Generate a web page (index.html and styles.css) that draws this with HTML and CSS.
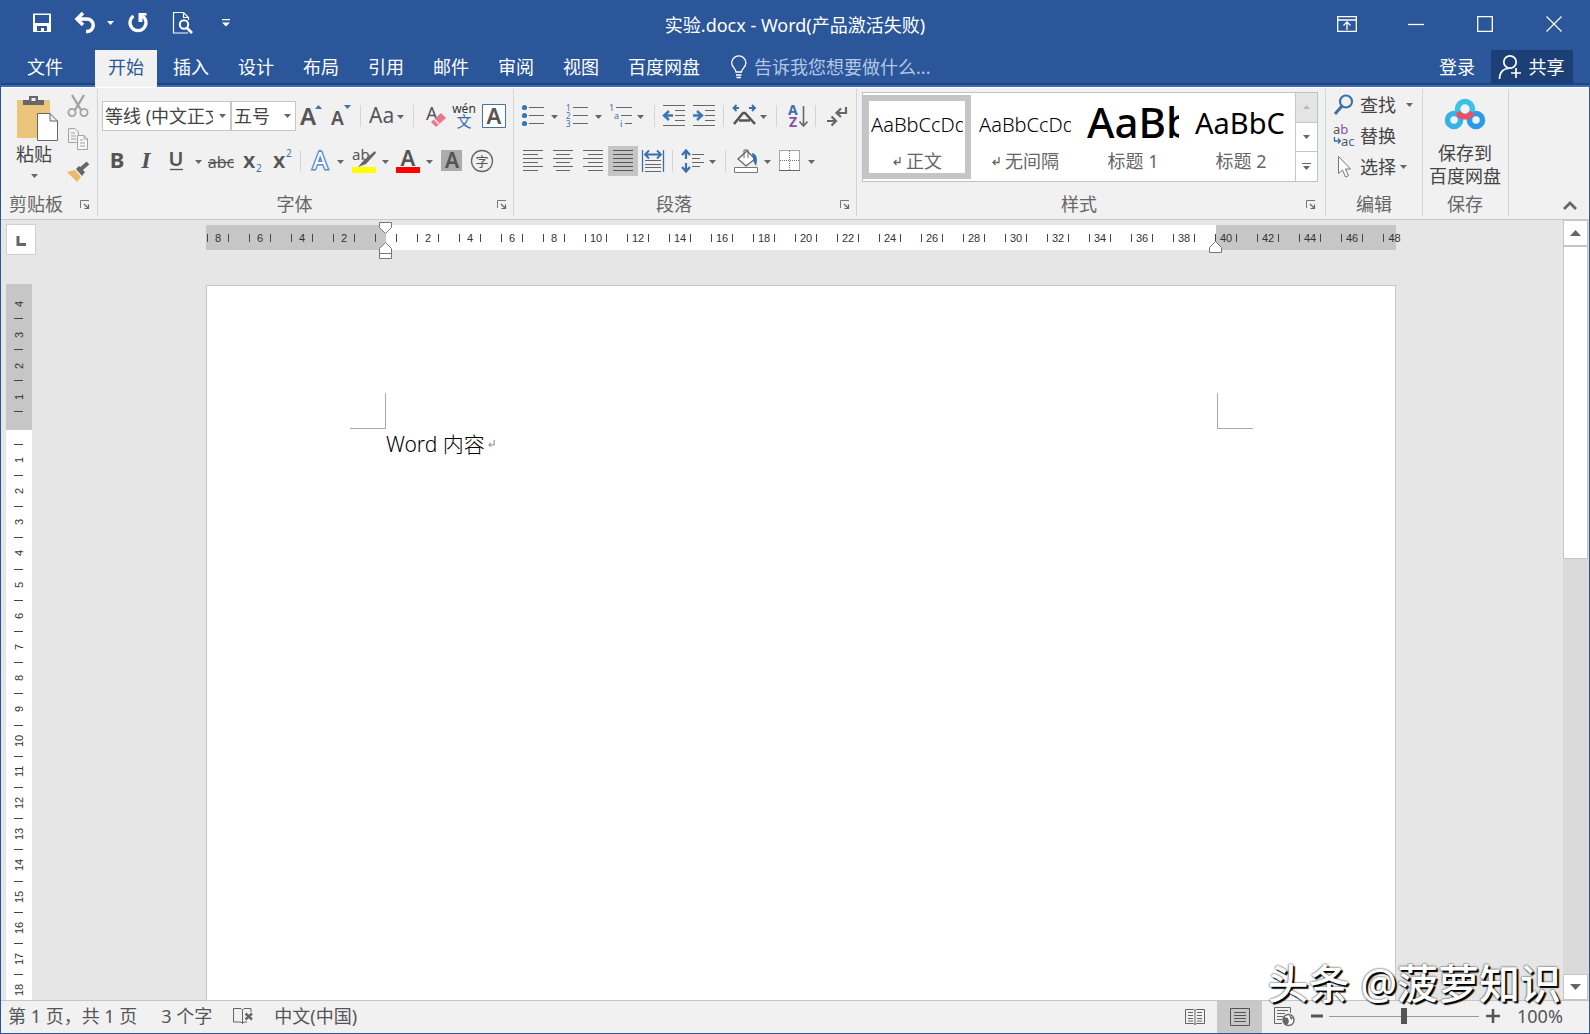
FILE: index.html
```html
<!DOCTYPE html>
<html lang="zh-CN">
<head>
<meta charset="utf-8">
<title>实验.docx - Word</title>
<link rel="stylesheet" href="styles.css">
</head>
<body>
<svg class="defs" aria-hidden="true">
  <defs>
    <path id="caret" d="M0 0h7l-3.500 4z" fill="#666"/>
    <g id="launch"><path d="M.5 8V.5H9" fill="none" stroke="#777"/><path d="M4 4l4 4M8.500 4.500v4h-4" fill="none" stroke="#666" stroke-width="1.200"/></g>
  </defs>
</svg>

<header class="titlebar">
  <div class="quick">
    <button class="q-btn" aria-label="保存"><svg width="22" height="22" viewBox="0 0 22 22"><path d="M2 1.500h18v18.500H2z" fill="#fff"/><path d="M4 3h14v8H4zM6 14h10v5h-3v-3h-3v3H6z" fill="#2b579a"/></svg></button>
    <button class="q-btn wide" aria-label="撤消"><svg width="34" height="22" viewBox="0 0 34 22"><path d="M10 1L4 7l6 6M5 7h9a6 6 0 0 1 0 12.500h-1" fill="none" stroke="#fff" stroke-width="3.500"/><path d="M34 9h7l-3.500 4z" fill="#fff"/></svg></button>
    <button class="q-btn" aria-label="重复"><svg width="22" height="22" viewBox="0 0 22 22"><path d="M6.500 4A8 8 0 1 0 15.500 4" fill="none" stroke="#fff" stroke-width="3.200"/><path d="M11.500 1h8v2.500h-4V10h-4z" fill="#fff"/></svg></button>
    <button class="q-btn" aria-label="打印预览"><svg width="26" height="24" viewBox="-3 0 26 24"><path d="M16 22H1.500V1.500h10l5 5V9M11.500 1.500v5h5" fill="none" stroke="#fff" stroke-width="1.200"/><circle cx="12" cy="13.500" r="4.200" fill="none" stroke="#fff" stroke-width="2"/><path d="M15 17l5 5" stroke="#fff" stroke-width="2.600"/></svg></button>
    <button class="q-btn" aria-label="自定义快速访问工具栏"><svg width="8" height="8" viewBox="0 0 8 8"><path d="M0 0h8v1.300H0zM0 3.500h8l-4 4z" fill="#fff"/></svg></button>
  </div>
  <h1 class="title">实验.docx - Word(产品激活失败)</h1>
  <div class="win">
    <button aria-label="功能区显示选项"><svg width="20" height="16" viewBox="0 0 20 16"><path d="M.7.7h18.600v14.600H.7zM.7 4h18.600M10 14V6.500M6.500 9.500L10 6l3.500 3.500" fill="none" stroke="#fff" stroke-width="1.300"/></svg></button>
    <button aria-label="最小化"><svg width="16" height="16" viewBox="0 0 16 16"><path d="M0 8.500h16" stroke="#fff" stroke-width="1.300"/></svg></button>
    <button aria-label="最大化"><svg width="16" height="16" viewBox="0 0 16 16"><path d="M.7.7h14.600v14.600H.7z" fill="none" stroke="#fff" stroke-width="1.300"/></svg></button>
    <button aria-label="关闭"><svg width="16" height="16" viewBox="0 0 16 16"><path d="M.5.5l15 15M15.500.5l-15 15" stroke="#fff" stroke-width="1.200"/></svg></button>
  </div>
</header>

<nav class="tabs">
  <button class="tab file">文件</button>
  <button class="tab active">开始</button>
  <button class="tab">插入</button>
  <button class="tab">设计</button>
  <button class="tab">布局</button>
  <button class="tab">引用</button>
  <button class="tab">邮件</button>
  <button class="tab">审阅</button>
  <button class="tab">视图</button>
  <button class="tab">百度网盘</button>
  <label class="tell"><svg width="18" height="24" viewBox="0 0 18 24"><path d="M6 17c0-3-4.300-5-4.300-9a7 7 0 0 1 14.200 0c0 4-4.400 6-4.400 9zM6 20h5.500M6.500 22.500h4.500" fill="none" stroke="#fff" stroke-width="1.300"/></svg><input type="text" placeholder="告诉我您想要做什么..."></label>
  <button class="tab login">登录</button>
  <button class="share"><svg width="24" height="26" viewBox="0 0 24 26"><circle cx="12" cy="8" r="6.200" fill="none" stroke="#fff" stroke-width="1.700"/><path d="M1.500 25c0-7 4-10.500 9-10.500M18 14v10M13 19h10" fill="none" stroke="#fff" stroke-width="1.700"/></svg>共享</button>
</nav>

<section class="ribbon">
  <div class="group clip">
    <div class="clip-body">
      <button class="paste">
        <svg width="50" height="46" viewBox="-8 0 50 46"><path d="M0 4h33v38H0z" fill="#ecc57c"/><path d="M6 9V4h6V0h9v4h6v5z" fill="#666"/><path d="M14.500 2h4v3h-4z" fill="#f1f1f1"/><path d="M20.500 17.500H33l7.500 7.500v19.500h-20zM33 17.500V25h7.500" fill="#fff" stroke="#666"/></svg>
        <span>粘贴</span>
        <svg width="7" height="4"><use href="#caret"/></svg>
      </button>
      <div class="clip-side">
        <button aria-label="剪切"><svg width="22" height="24" viewBox="0 0 22 24"><path d="M5 1l9 15M17 1L8 16" fill="none" stroke="#a3a3a3" stroke-width="2.400"/><circle cx="5" cy="18.500" r="3.600" fill="none" stroke="#a3a3a3" stroke-width="1.800"/><circle cx="17" cy="18.500" r="3.600" fill="none" stroke="#a3a3a3" stroke-width="1.800"/></svg></button>
        <button aria-label="复制"><svg width="22" height="24" viewBox="0 0 22 24"><path d="M10 15.500H1.500v-14H8l3.500 3.500v3M4 6h4M4 9h5M4 12h5" fill="none" stroke="#a3a3a3"/><path d="M10.500 8.500H17l3.500 3.500v10.500h-10zM17 8.500V12h3.500M13 13h3M13 16h5M13 19h5" fill="#f7f7f7" stroke="#a3a3a3"/></svg></button>
        <button aria-label="格式刷"><svg width="24" height="24" viewBox="0 0 24 24"><path d="M1 12l8-2 6 7-4 5z" fill="#ecb96b"/><path d="M10 9l3-3 6 6-3 4z" fill="#666"/><path d="M15 9l7-6" stroke="#666" stroke-width="4"/></svg></button>
      </div>
    </div>
    <div class="cap"><span>剪贴板</span><button class="launch" aria-label="剪贴板选项"><svg width="10" height="10"><use href="#launch"/></svg></button></div>
  </div>

  <div class="group font">
    <div class="row">
      <span class="combo name"><select aria-label="字体"><option>等线 (中文正文)</option></select><svg width="7" height="4"><use href="#caret"/></svg></span>
      <span class="combo size"><select aria-label="字号"><option>五号</option></select><svg width="7" height="4"><use href="#caret"/></svg></span>
      <button class="b" aria-label="增大字号"><svg class="ic" viewBox="0 0 30 30"><text x="4" y="24" font-size="24" class="g sb">A</text><path d="M19 8l3.500-4L26 8z" fill="#3f6fb0"/></svg></button>
      <button class="b" aria-label="减小字号"><svg class="ic" viewBox="0 0 30 30"><text x="5" y="24" font-size="19" class="g sb">A</text><path d="M18 4h7l-3.500 4z" fill="#3f6fb0"/></svg></button>
      <i class="sep"></i>
      <button class="b w" aria-label="更改大小写"><svg class="ic" viewBox="0 0 44 30"><text x="4" y="22" font-size="21" class="g">Aa</text><use href="#caret" x="32" y="14"/></svg></button>
      <i class="sep"></i>
      <button class="b" aria-label="清除格式"><svg class="ic" viewBox="0 0 30 30"><text x="8" y="19" font-size="18" class="g">A</text><path d="M13 21l10-9 5 5-10 9z" fill="#e8798c"/><path d="M16 18l5 5" stroke="#f1f1f1" stroke-width="1.200"/></svg></button>
      <button class="b" aria-label="拼音指南"><svg class="ic" viewBox="0 0 30 30"><text x="16" y="12" font-size="12" text-anchor="middle" class="d">wén</text><text x="16" y="26" font-size="15" text-anchor="middle" class="bl">文</text></svg></button>
      <button class="b" aria-label="字符边框"><svg class="ic" viewBox="0 0 30 30"><path d="M4.500 3.500h23v23h-23z" fill="#fff" stroke="#44749f"/><text x="16" y="23" font-size="22" text-anchor="middle" class="g sb">A</text></svg></button>
    </div>
    <div class="row">
      <button class="b" aria-label="加粗"><svg class="ic" viewBox="0 0 30 30"><text x="15" y="22" font-size="22" text-anchor="middle" class="g bold">B</text></svg></button>
      <button class="b" aria-label="倾斜"><svg class="ic" viewBox="0 0 30 30"><text x="14" y="22" font-size="24" text-anchor="middle" class="g serif">I</text></svg></button>
      <button class="b w" aria-label="下划线"><svg class="ic" viewBox="0 0 44 30"><text x="14" y="20" font-size="20" text-anchor="middle" class="g sb">U</text><path d="M8 23.500h13" stroke="#555" stroke-width="1.300"/><use href="#caret" x="33" y="14"/></svg></button>
      <button class="b" aria-label="删除线"><svg class="ic" viewBox="0 0 30 30"><text x="15" y="22" font-size="16" text-anchor="middle" class="g">abc</text><path d="M2 16.500h26" stroke="#555" stroke-width="1.300"/></svg></button>
      <button class="b" aria-label="下标"><svg class="ic" viewBox="0 0 30 30"><text x="7" y="22" font-size="22" class="g sb">x</text><text x="20" y="26" font-size="10" class="bl">2</text></svg></button>
      <button class="b" aria-label="上标"><svg class="ic" viewBox="0 0 30 30"><text x="7" y="22" font-size="22" class="g sb">x</text><text x="20" y="11" font-size="10" class="bl">2</text></svg></button>
      <i class="sep"></i>
      <button class="b w" aria-label="文本效果"><svg class="ic" viewBox="0 0 44 30"><text x="15" y="23" font-size="23" text-anchor="middle" class="glow">A</text><use href="#caret" x="32" y="14"/></svg></button>
      <button class="b w" aria-label="突出显示颜色"><svg class="ic" viewBox="0 0 44 30"><text x="3" y="14" font-size="15" class="g">ab</text><path d="M26 5l-11 9-6 7 8-3L27 7z" fill="#666"/><path d="M3 21h24v6H3z" fill="#ff0"/><use href="#caret" x="33" y="14"/></svg></button>
      <button class="b w" aria-label="字体颜色"><svg class="ic" viewBox="0 0 44 30"><text x="15" y="20" font-size="22" text-anchor="middle" class="g sb">A</text><path d="M3 21h24v6H3z" fill="red"/><use href="#caret" x="33" y="14"/></svg></button>
      <button class="b" aria-label="字符底纹"><svg class="ic" viewBox="0 0 30 30"><path d="M4 4h21v21H4z" fill="#acacac"/><text x="15" y="22" font-size="21" text-anchor="middle" class="g sb">A</text></svg></button>
      <button class="b" aria-label="带圈字符"><svg class="ic" viewBox="0 0 30 30"><circle cx="15" cy="15" r="10.500" fill="none" stroke="#666" stroke-width="1.300"/><text x="15" y="20" font-size="13" text-anchor="middle" class="g">字</text></svg></button>
    </div>
    <div class="cap"><span>字体</span><button class="launch" aria-label="字体选项"><svg width="10" height="10"><use href="#launch"/></svg></button></div>
  </div>

  <div class="group para">
    <div class="row">
      <button class="b w" aria-label="项目符号"><svg class="ic" viewBox="0 0 44 30"><g fill="#3a78b5"><circle cx="6.500" cy="6.500" r="2.600"/><circle cx="6.500" cy="14.500" r="2.600"/><circle cx="6.500" cy="22.500" r="2.600"/></g><path d="M11 6.500h15M11 14.500h15M11 22.500h15" stroke="#666"/><use href="#caret" x="33" y="14"/></svg></button>
      <button class="b w" aria-label="编号"><svg class="ic" viewBox="0 0 44 30"><g font-size="8" class="bl"><text x="4" y="10">1</text><text x="4" y="18">2</text><text x="4" y="26">3</text></g><path d="M11 6.500h15M11 14.500h15M11 22.500h15" stroke="#666"/><use href="#caret" x="33" y="14"/></svg></button>
      <button class="b w" aria-label="多级列表"><svg class="ic" viewBox="0 0 44 30"><g font-size="9" class="bl"><text x="3" y="10">1</text><text x="8" y="18">a</text><text x="14" y="26">i</text></g><path d="M10 6.500h16M15 14.500h11M19 22.500h7" stroke="#666"/><use href="#caret" x="31" y="14"/></svg></button>
      <i class="sep"></i>
      <button class="b" aria-label="减少缩进量"><svg class="ic" viewBox="0 0 30 30"><path d="M4 4.500h22M16 9.500h10M16 14.500h10M16 19.500h10M4 24.500h22" stroke="#666"/><path d="M14 14.500H6M10 10l-5 4.500 5 4.500" fill="none" stroke="#3a78b5" stroke-width="2.400"/></svg></button>
      <button class="b" aria-label="增加缩进量"><svg class="ic" viewBox="0 0 30 30"><path d="M4 4.500h22M16 9.500h10M16 14.500h10M16 19.500h10M4 24.500h22" stroke="#666"/><path d="M4 14.500h8M8 10l5 4.500L8 19" fill="none" stroke="#3a78b5" stroke-width="2.400"/></svg></button>
      <i class="sep"></i>
      <button class="b w" aria-label="中文版式"><svg class="ic" viewBox="0 0 44 30"><path d="M11 7H5.500M8.500 4l-3 3 3 3M21 7h6M24 4l3 3-3 3" fill="none" stroke="#3a6fae" stroke-width="1.800"/><path d="M6 23l9-11h2l10 11M11 19.500h11" fill="none" stroke="#555" stroke-width="2.600"/><use href="#caret" x="32" y="14"/></svg></button>
      <i class="sep"></i>
      <button class="b" aria-label="排序"><svg class="ic" viewBox="0 0 30 30"><text x="7" y="14" font-size="14" class="bl bold">A</text><text x="8" y="26" font-size="14" class="pu bold">Z</text><path d="M22.500 5v20M18.500 20.500l4 4.500 4-4.500" fill="none" stroke="#666" stroke-width="1.600"/></svg></button>
      <i class="sep"></i>
      <button class="b" aria-label="显示编辑标记"><svg class="ic" viewBox="0 0 30 30"><path d="M26 6v6h-9M21 7.500L16.500 12l4.500 4M7 20h8M11.500 15.500L16 20l-4.500 4.500" fill="none" stroke="#666" stroke-width="2.200"/></svg></button>
    </div>
    <div class="row">
      <button class="b" aria-label="左对齐"><svg class="ic" viewBox="0 0 30 30"><path d="M5 4.500h20M5 8.500h15M5 12.500h20M5 16.500h15M5 20.500h20M5 24.500h15" stroke="#666"/></svg></button>
      <button class="b" aria-label="居中"><svg class="ic" viewBox="0 0 30 30"><path d="M5 4.500h20M8 8.500h14M5 12.500h20M8 16.500h14M5 20.500h20M8 24.500h14" stroke="#666"/></svg></button>
      <button class="b" aria-label="右对齐"><svg class="ic" viewBox="0 0 30 30"><path d="M5 4.500h20M10 8.500h15M5 12.500h20M10 16.500h15M5 20.500h20M10 24.500h15" stroke="#666"/></svg></button>
      <button class="b on" aria-label="两端对齐" aria-pressed="true"><svg class="ic" viewBox="0 0 30 30"><path d="M5 4.500h20M5 8.500h20M5 12.500h20M5 16.500h20M5 20.500h20M5 24.500h20" stroke="#555"/></svg></button>
      <button class="b" aria-label="分散对齐"><svg class="ic" viewBox="0 0 30 30"><path d="M4.500 4v22M25.500 4v22" stroke="#3a6fae" stroke-width="1.300"/><path d="M7 8.500h16M11 4.500l-4 4 4 4M19 4.500l4 4-4 4" fill="none" stroke="#3a6fae" stroke-width="1.800"/><path d="M7 14.500h16M7 18.500h16M7 21.500h16M7 25.500h16" stroke="#666"/></svg></button>
      <i class="sep"></i>
      <button class="b w" aria-label="行和段落间距"><svg class="ic" viewBox="0 0 44 30"><path d="M9 5v8M5 9l4-4.500L13 9M9 17v8M5 21l4 4.500 4-4.500" fill="none" stroke="#3a6fae" stroke-width="2.200"/><path d="M15 8.500h12M15 12.500h8M15 16.500h12M15 20.500h8" stroke="#666"/><use href="#caret" x="32" y="14"/></svg></button>
      <i class="sep"></i>
      <button class="b w" aria-label="底纹"><svg class="ic" viewBox="0 0 44 30"><path d="M8 13l9-8 8 8-9 7z" fill="#fff" stroke="#666" stroke-width="1.300"/><path d="M14 12V4h4v8" fill="none" stroke="#666"/><path d="M22 7c5 1 6 6 4 13-2-3-3-5-3-8z" fill="#3a6fae"/><path d="M4.500 21.500h23v5h-23z" fill="#fff" stroke="#777"/><use href="#caret" x="34" y="14"/></svg></button>
      <button class="b w" aria-label="边框"><svg class="ic" viewBox="0 0 44 30"><path d="M5.500 4.500h20v20h-20z" fill="#fff" stroke="#555" stroke-dasharray="1 1"/><path d="M15.500 5v19M6 14.500h19" stroke="#777" stroke-dasharray="1 1"/><path d="M5 24.500h21" stroke="#666"/><use href="#caret" x="34" y="14"/></svg></button>
    </div>
    <div class="cap"><span>段落</span><button class="launch" aria-label="段落选项"><svg width="10" height="10"><use href="#launch"/></svg></button></div>
  </div>

  <div class="group styles">
    <div class="gallery">
      <button class="style sel"><span class="sample body">AaBbCcDd</span><span class="sname"><svg width="9" height="9" viewBox="0 0 9 9"><path d="M8 0v5.500H2M4.500 3L2 5.500 4.500 8" fill="none" stroke="#666" stroke-width="1.300"/></svg>正文</span></button>
      <button class="style"><span class="sample body">AaBbCcDd</span><span class="sname"><svg width="9" height="9" viewBox="0 0 9 9"><path d="M8 0v5.500H2M4.500 3L2 5.500 4.500 8" fill="none" stroke="#666" stroke-width="1.300"/></svg>无间隔</span></button>
      <button class="style"><span class="sample h1">AaBb</span><span class="sname">标题 1</span></button>
      <button class="style"><span class="sample h2">AaBbC</span><span class="sname">标题 2</span></button>
      <div class="g-scroll">
        <button class="off" aria-label="上一行"><svg width="7" height="4"><path d="M0 4h7L3.500 0z" fill="#bbb"/></svg></button>
        <button aria-label="下一行"><svg width="7" height="4"><use href="#caret"/></svg></button>
        <button aria-label="其他"><svg width="9" height="8" viewBox="0 0 9 8"><path d="M0 .5h9" stroke="#666"/><use href="#caret" x="1" y="3"/></svg></button>
      </div>
    </div>
    <div class="cap"><span>样式</span><button class="launch" aria-label="样式选项"><svg width="10" height="10"><use href="#launch"/></svg></button></div>
  </div>

  <div class="group edit">
    <div class="edit-list">
      <button><svg width="24" height="24" viewBox="0 0 24 24"><circle cx="14" cy="8.500" r="6" fill="none" stroke="#3f6fa8" stroke-width="2.200"/><path d="M10 13l-7 8" stroke="#3f6fa8" stroke-width="3"/></svg><span>查找</span><svg class="gap" width="7" height="4"><use href="#caret"/></svg></button>
      <button><svg width="24" height="24" viewBox="0 0 24 24"><g font-size="13"><text x="1" y="10" class="g">a<tspan class="pu">b</tspan></text><text x="9" y="22" class="g">a<tspan class="bl">c</tspan></text></g><path d="M2.500 13v4H8M6 14.500L8.500 17 6 19.500" fill="none" stroke="#3a6fae" stroke-width="1.300"/></svg><span>替换</span></button>
      <button><svg width="24" height="24" viewBox="0 0 24 24"><path d="M6.500 1.500v17l4-3.500 3 7 3-1.300-3-6.700h5z" fill="#fff" stroke="#777"/></svg><span>选择</span><svg width="7" height="4"><use href="#caret"/></svg></button>
    </div>
    <div class="cap"><span>编辑</span></div>
  </div>

  <div class="group save">
    <button class="pan">
      <svg width="40" height="34" viewBox="0 0 40 34"><g fill="none" stroke-width="5.500"><circle cx="9" cy="22" r="6.500" stroke="#35b3e6"/><circle cx="31" cy="22" r="6.500" stroke="#2a9be8"/><circle cx="20" cy="11" r="7.500" stroke="#38c3e6"/><path d="M13 14a7.500 7.500 0 0 0 14 0" stroke="#ee4f63"/></g></svg>
      <span>保存到</span><span>百度网盘</span>
    </button>
    <div class="cap"><span>保存</span></div>
  </div>
  <button class="collapse" aria-label="折叠功能区"><svg width="14" height="9" viewBox="0 0 14 9"><path d="M1 8l6-6 6 6" fill="none" stroke="#666" stroke-width="2.800"/></svg></button>
</section>

<main class="work">
  <aside class="left">
    <button class="tabsel" aria-label="制表符"><svg width="10" height="10"><path d="M2 0v8.500h8" fill="none" stroke="#666" stroke-width="3"/></svg></button>
    <div class="vruler">
      <div class="v-margin"><b>4</b><b>3</b><b>2</b><b>1</b></div>
      <div class="v-text"><b></b><b>1</b><b>2</b><b>3</b><b>4</b><b>5</b><b>6</b><b>7</b><b>8</b><b>9</b><b>10</b><b>11</b><b>12</b><b>13</b><b>14</b><b>15</b><b>16</b><b>17</b><b>18</b><b>19</b><b>20</b></div>
    </div>
  </aside>
  <div class="canvas">
    <div class="hruler">
      <span>8</span><span>6</span><span>4</span><span>2</span><span></span><span>2</span><span>4</span><span>6</span><span>8</span><span>10</span><span>12</span><span>14</span><span>16</span><span>18</span><span>20</span><span>22</span><span>24</span><span>26</span><span>28</span><span>30</span><span>32</span><span>34</span><span>36</span><span>38</span><span>40</span><span>42</span><span>44</span><span>46</span><span>48</span>
      <svg class="mk-left" width="13" height="38" viewBox="0 0 13 38"><path d="M.5.500h12v5l-6 6-6-6zM.5 31.500v-5l6-6 6 6v5zM.5 31.500h12v5h-12z" fill="#fff" stroke="#777"/></svg>
      <svg class="mk-right" width="13" height="12" viewBox="0 0 13 12"><path d="M.5 11.500v-5l6-6 6 6v5z" fill="#fff" stroke="#777"/></svg>
    </div>
    <article class="page">
      <div class="corners"><i class="c-left"></i><i class="c-right"></i></div>
      <p>Word 内容<svg width="8" height="8" viewBox="0 0 9 9"><path d="M8 0v5.500H2M4.500 3L2 5.500 4.500 8" fill="none" stroke="#777"/></svg></p>
    </article>
  </div>
  <div class="scroll">
    <button aria-label="向上滚动"><svg width="11" height="6"><path d="M0 6h11L5.500 0z" fill="#666"/></svg></button>
    <div class="track"><div class="thumb"></div></div>
    <button aria-label="向下滚动"><svg width="11" height="6"><path d="M0 0h11L5.500 6z" fill="#666"/></svg></button>
  </div>
</main>

<footer class="status">
  <span class="s1">第 1 页，共 1 页</span>
  <span class="s2">3 个字</span>
  <svg width="22" height="18" viewBox="0 0 22 18"><path d="M10.500 16.500L9 15H1.500V1.500H9l1.500 1.500 1.500-1.500h7V5M10.500 3v13.500M10.500 16.500L12 15h3" fill="none" stroke="#666"/><path d="M13.500 6.500l6.500 6M20 6.500l-6.500 6" stroke="#666" stroke-width="2.400"/></svg>
  <span class="s3">中文(中国)</span>
  <div class="views">
    <button aria-label="阅读视图"><svg width="20" height="18" viewBox="0 0 20 18"><path d="M10 16.500L8.500 15.500H.5v-14h8L10 2.500l1.500-1h8v14h-8zM10 2.500v14M3 4.500h5M3 7.500h5M3 10.500h5M3 13h5M12 4.500h5M12 7.500h5M12 10.500h5M12 13h5" fill="none" stroke="#666"/></svg></button>
    <button class="cur" aria-label="页面视图"><svg width="20" height="18" viewBox="0 0 20 18"><path d="M.5.5h19v17H.5zM4 4.500h12M4 7.500h12M4 10.500h12M4 13.500h12" fill="none" stroke="#555"/></svg></button>
    <button aria-label="Web 版式视图"><svg width="22" height="20" viewBox="0 0 22 20"><path d="M8 16.500H.5V.5h16V6M3 3.500h11M3 6.500h8M3 9.500h6M3 12.500h5" fill="none" stroke="#666"/><circle cx="14.500" cy="13" r="5.500" fill="#fff" stroke="#666" stroke-width="1.400"/><path d="M10 10l4 1 1 4-2 3c-3-1-5-4-3-8zM15 8l4 3-2 2z" fill="#666"/></svg></button>
  </div>
  <button class="z" aria-label="缩小"><svg width="12" height="12"><path d="M0 6h12" stroke="#555" stroke-width="3"/></svg></button>
  <input class="slider" type="range" min="0" max="200" value="100" aria-label="显示比例">
  <button class="z" aria-label="放大"><svg width="14" height="14"><path d="M0 7h14M7 0v14" stroke="#555" stroke-width="2.600"/></svg></button>
  <span class="pct">100%</span>
</footer>
<div class="mark">头条 @菠萝知识</div>
</body>
</html>
```
FILE: styles.css
```css
* { box-sizing: border-box; }
html, body { margin: 0; height: 100%; }
body {
  display: flex; flex-direction: column; overflow: hidden;
  border: 1px solid #2b579a; border-top: 0;
  background: #e6e6e6; color: #444;
  font: 18px/24px "Noto Sans", "Noto Sans CJK SC", sans-serif;
}
button, input, select { font: inherit; color: inherit; }
button { border: 0; padding: 0; margin: 0; background: none; display: flex; align-items: center; justify-content: center; }
svg { display: block; flex: none; overflow: visible; }
.defs { position: absolute; width: 0; height: 0; }

.titlebar { flex: none; height: 50px; display: grid; grid-template-columns: 1fr auto 1fr; align-items: center; background: #2b579a; color: #fff; }
.quick { display: flex; align-items: center; padding: 0 0 4px 30px; gap: 20px; }
.q-btn { height: 24px; min-width: 22px; }
.title { margin: 0; font-size: 18px; font-weight: 400; }
.win { display: flex; justify-content: flex-end; align-self: start; padding-right: 1px; }
.win button { width: 69px; height: 48px; }

.tabs { flex: none; height: 37px; padding: 0 16px 3px 0; display: flex; align-items: stretch; gap: 3px; background: linear-gradient(#2b579a 33px, #1d4480 33px 35px, #3e6db5 35px); color: #fff; }
.tab { flex: none; padding: 0 13px; }
.tab.file { padding: 0 26px; margin-right: 3px; }
.tab.active { background: #f1f1f1; color: #2b579a; margin-bottom: -3px; padding-bottom: 3px; }
.tell { flex: 1; display: flex; align-items: center; gap: 6px; padding-left: 14px; }
.tell input { flex: 1; min-width: 0; border: 0; padding: 0; background: none; color: #fff; outline: 0; }
.tell input::placeholder { color: #b4c6e4; opacity: 1; }
.share { background: #1c4076; padding: 0 8px 0 6px; gap: 7px; width: 82px; }

.ribbon { flex: none; display: flex; height: 133px; padding: 1px 12px 0 0; background: #f1f1f1; border-top: 1px solid #fff; border-bottom: 1px solid #c8c8c8; }
.group { flex: none; display: flex; flex-direction: column; height: 127px; padding: 12px 4px 0; border-right: 1px solid #d4d4d4; }
.cap { display: grid; grid-template-columns: 1fr auto; align-items: center; margin-top: auto; height: 24px; padding-bottom: 2px; color: #666; text-align: center; white-space: nowrap; }
.launch { width: 22px; padding: 2px 2px 0 0; justify-content: flex-end; }
.clip .launch { padding-right: 0; }
.clip { width: 97px; padding: 4px 7px 0 8px; }
.clip .cap { text-align: left; }
.font { width: 416px; }
.para { width: 343px; }
.row { display: flex; height: 30px; margin-bottom: 15px; }
.b { width: 30px; height: 30px; }
.b.w { width: 44px; }
.b.on { background: #c5c5c5; }
.ic { width: 100%; height: 30px; }
.sep { width: 1px; height: 22px; margin: 4px; background: #d4d4d4; }
.g { fill: #555; } .d { fill: #333; } .bl { fill: #3a6fae; } .pu { fill: #8a4fa3; }
.sb { font-weight: 600; } .bold { font-weight: 700; }
.serif { font-family: "Liberation Serif", serif; font-style: italic; font-weight: 700; }
.glow { fill: #fff; stroke: #5b8fd0; stroke-width: 3px; paint-order: stroke; }

.clip-body { display: flex; justify-content: space-between; }
.paste { flex-direction: column; width: 50px; height: 92px; color: #444; padding-top: 3px; justify-content: flex-start; }
.paste span + svg { margin-top: 8px; }
.clip-side { display: flex; flex-direction: column; gap: 9px; width: 24px; padding-top: 1px; }
.clip-side button { height: 24px; }
.combo { display: grid; align-items: center; height: 30px; background: #fff; border: 1px solid #c6c6c6; }
.combo > * { grid-area: 1 / 1; }
.combo svg { justify-self: end; margin-right: 4px; pointer-events: none; }
.combo select { appearance: none; border: 0; background: none; width: 100%; height: 28px; padding: 0 17px 0 2px; outline: 0; min-width: 0; overflow: hidden; text-overflow: clip; }
.combo.name { width: 129px; }
.combo.size { width: 65px; }

.styles { width: 469px; padding: 3px 7px 0 5px; }
.gallery { display: flex; height: 90px; background: #fff; border: 1px solid #b9c3cf; }
.style { flex: 1; min-width: 0; flex-direction: column; margin: 2px 0; border: 6px solid transparent; overflow: hidden; justify-content: flex-start; }
.style.sel { border-color: #c5c5c5; }
.sample { display: block; width: 92px; height: 48px; overflow: hidden; white-space: nowrap; text-align: left; color: #000; line-height: 48px; }
.sample.body { font-size: 20px; font-weight: 300; }
.sample.h1 { font-size: 42px; font-weight: 500; line-height: 42px; }
.sample.h2 { font-size: 29px; line-height: 44px; }
.sname { display: flex; align-items: center; gap: 5px; color: #666; white-space: nowrap; }
.g-scroll { width: 22px; display: flex; flex-direction: column; }
.g-scroll button { flex: 1; border-left: 1px solid #c6c6c6; border-bottom: 1px solid #c6c6c6; }
.g-scroll button:last-child { border-bottom: 0; }
.g-scroll .off { background: #e4e4e4; }

.edit { width: 97px; padding: 0 6px; }
.edit-list button { height: 31px; gap: 4px; }
.edit-list .gap { margin-left: 6px; }
.save { width: 86px; padding: 9px 5px 0 4px; }
.pan { flex-direction: column; white-space: nowrap; }
.pan svg { margin-bottom: 10px; }
.pan span { line-height: 23px; }
.collapse { margin: auto 0 9px auto; width: 14px; }

.work { flex: 1; min-height: 0; display: flex; overflow: hidden; }
.left { flex: none; width: 38px; padding: 4px 0 0 5px; }
.tabsel { width: 30px; height: 31px; background: #fff; border: 1px solid #d0d0d0; margin-bottom: 29px; }
.tabsel svg { margin-top: 3px; }
.vruler { width: 26px; }
.vruler b { display: flex; align-items: center; justify-content: center; height: 31px; writing-mode: vertical-rl; transform: rotate(180deg); font: 400 11px/26px "Liberation Sans", sans-serif; color: #333; background: linear-gradient(#444, #444) center bottom / 9px 1px no-repeat; }
.v-margin { height: 146px; padding-top: 4px; background: #c6c6c6; overflow: hidden; }
.v-margin b { background-position: center top; }
.v-text { background: #fff; }
.v-text b:first-child { height: 14px; }
.v-text b:nth-child(5n) { height: 32px; }
.canvas { flex: 1; min-width: 0; display: flex; flex-direction: column; align-items: center; }
.hruler { flex: none; position: relative; width: 1190px; height: 25px; margin: 5px 0 35px; padding: 0 0 0 1px; display: flex; align-items: center; gap: 20px; background: linear-gradient(90deg, #c6c6c6 180px, #fff 180px 1010px, #c6c6c6 1010px); }
.hruler span { flex: none; display: flex; justify-content: center; align-items: center; width: 22px; height: 8px; border: solid #444; border-width: 0 1px; font: 11px/12px "Liberation Sans", sans-serif; color: #333; }
.hruler span:nth-last-of-type(1) { border-right: 0; }
.mk-left, .mk-right { position: absolute; }
.mk-left { left: 173px; top: -3px; }
.mk-right { left: 1003px; top: 16px; }
.page { flex: 1; width: 1190px; background: #fff; border: 1px solid #c6c6c6; border-bottom: 0; color: #000; padding: 107px 142px 0 143px; }
.corners { display: flex; justify-content: space-between; }
.corners i { width: 36px; height: 36px; border-bottom: 1px solid #aaa; }
.c-left { border-right: 1px solid #aaa; }
.c-right { border-left: 1px solid #aaa; }
.page p { margin: 3px 36px; font-size: 21px; font-weight: 300; display: flex; align-items: center; gap: 2px; }
.scroll { flex: none; width: 26px; display: flex; flex-direction: column; padding: 0 1px 0 0; background: #dadada; }
.scroll button { height: 26px; flex: none; background: #fff; border: 1px solid #c6c6c6; }
.track { flex: 1; }
.thumb { height: 43%; background: #fff; border: 1px solid #c6c6c6; }

.status { flex: none; height: 34px; display: flex; align-items: center; background: #f1f1f1; border-top: 1px solid #c6c6c6; border-bottom: 1px solid #2b579a; color: #555; padding: 0 22px 2px 7px; white-space: nowrap; margin-bottom: -1px; }
.s2 { margin-left: 24px; }
.status > svg, .s3 { margin-left: 20px; }
.views { display: flex; align-self: stretch; margin: 0 0 -2px auto; }
.views button { width: 45px; }
.views .cur { background: #c8c8c8; }
.z { width: 20px; }
.slider { appearance: none; width: 150px; height: 16px; margin: 0 4px 0 2px; background: linear-gradient(#999, #999) center / 100% 1px no-repeat; }
.slider::-webkit-slider-thumb { appearance: none; width: 6px; height: 16px; background: #555; }
.pct { width: 50px; margin-left: 14px; }
.mark { position: absolute; right: 29px; bottom: 28px; font-size: 41px; line-height: 46px; font-weight: 500; color: #fff; text-shadow: 2px 2px 1px #000, 0 0 2px #000; }
```
